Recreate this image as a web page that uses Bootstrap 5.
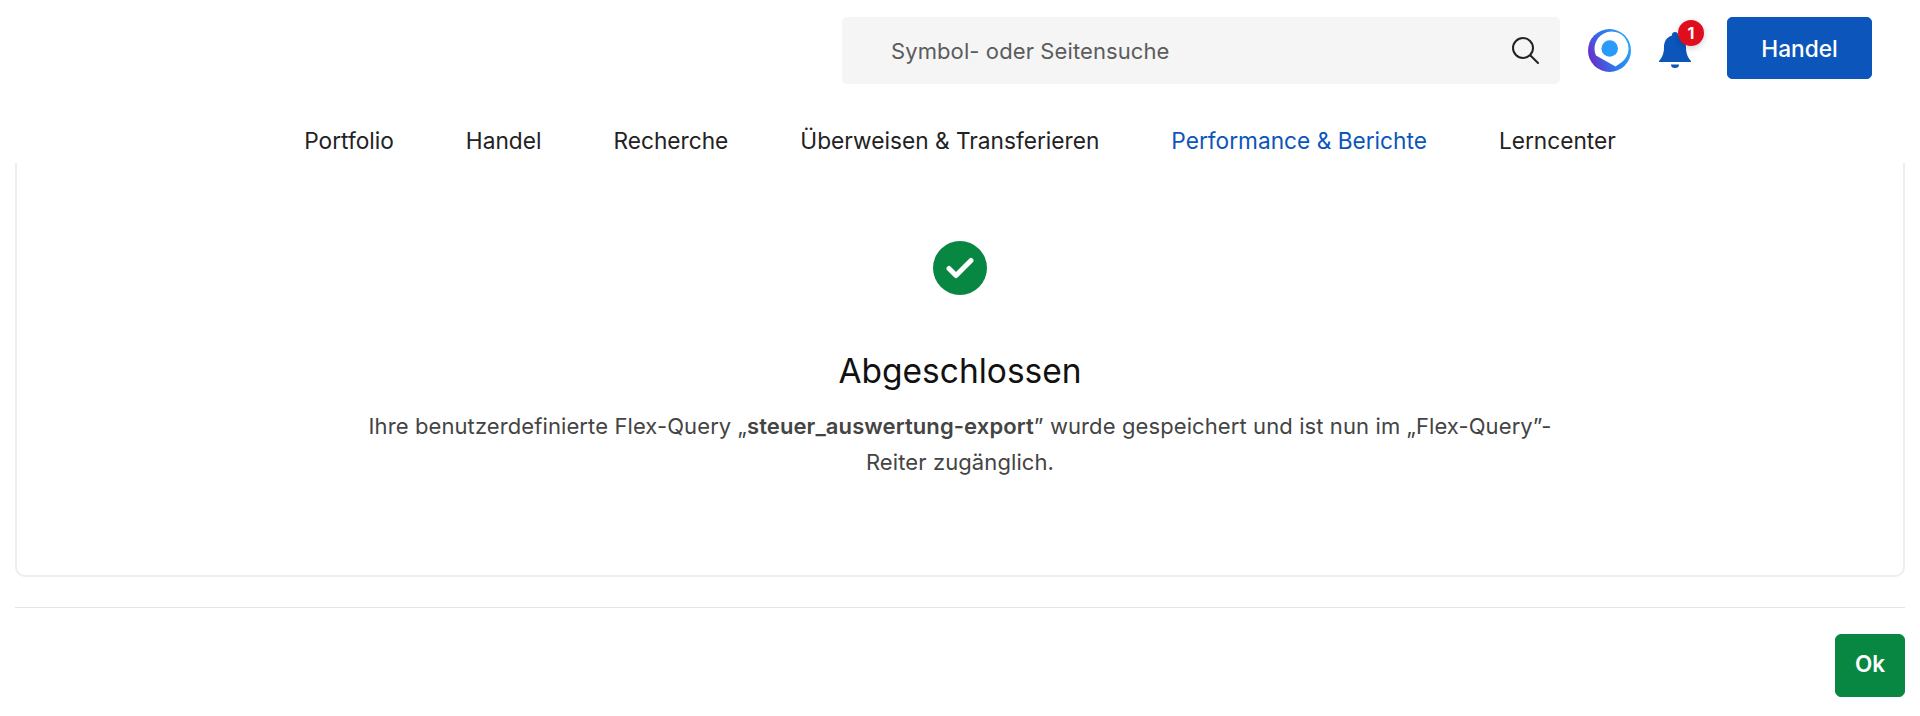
<!DOCTYPE html>
<html lang="de">
<head>
<meta charset="utf-8">
<title>Abgeschlossen</title>
<link href="https://cdn.jsdelivr.net/npm/bootstrap@5.3.0/dist/css/bootstrap.min.css" rel="stylesheet">
<style>
html,body{height:716px;overflow:hidden;background:#fff}
body{font-family:Inter,"Liberation Sans",sans-serif;color:#222}
.top-head{height:163px;padding-top:17px}
.top-bar{height:67px;padding-right:48px}
.search-wrap{width:718px;height:67px;background:#f5f5f5;border-radius:5px;padding:2px 20px 0 49px;margin-right:28px}
.search-field{background:transparent;border:0;outline:0;flex:1;font-size:22px;letter-spacing:.1px;padding:0;color:#555}
.search-field::placeholder{color:#5c5c5c;opacity:1}
.search-glass{margin-top:-4px}
.bell-box{width:32px;height:36px;margin-left:28px;margin-right:36px;margin-top:-2px}
.bell-count{width:26px;height:26px;top:-12px;right:-13px;background:#e00d1f;color:#fff;font-size:16px;font-weight:700;box-shadow:0 2px 6px rgba(0,0,0,.2)}
.trade-btn{width:145px;height:62px;background:#0b55bb;border-color:#0b55bb;color:#fff;font-size:22.700px;font-weight:500;border-radius:5px;margin-top:-5px;padding:2px 0 0}
.main-tabs{gap:72px;margin-top:43px}
.main-tabs .nav-link{padding:0;font-size:22.700px;line-height:28px;color:#222}
.main-tabs .nav-link.active{color:#0b55bb}
.page-wrap{padding:0 15px}
.done-card{height:414px;border:2px solid #eee;border-top:0;border-radius:0 0 10px 10px;padding-top:78px}
.done-check{width:54px;height:54px;background:#078742}
.done-title{font-size:33.500px;line-height:40px;font-weight:400;color:#111;margin:56px 0 17px}
.done-text{width:1200px;font-size:22px;letter-spacing:.1px;line-height:36px;color:#444}
.done-text strong{font-weight:600}
.rule{margin:30px 0 26px;border-top:1px solid #e4e4e4;opacity:1}
.ok-btn{width:70px;height:63px;background:#078742;border-color:#078742;color:#fff;font-size:22.500px;font-weight:600;border-radius:6px;padding:0 0 3px}
</style>
</head>
<body>
<header class="top-head">
  <div class="top-bar d-flex justify-content-end align-items-center">
    <div class="search-wrap d-flex align-items-center">
      <input class="search-field" type="text" placeholder="Symbol- oder Seitensuche" aria-label="Suche">
      <svg class="search-glass" width="30" height="30" viewBox="0 0 30 30" fill="none" stroke="#222" stroke-width="2" stroke-linecap="round"><circle cx="13" cy="13" r="10"/><path d="M20.500 20.500 28 28"/></svg>
    </div>
    <svg width="43" height="43" viewBox="0 0 43 43">
      <defs>
        <linearGradient id="ringg" x1="0" y1=".7" x2="1" y2=".3">
          <stop offset="0" stop-color="#7028c8"/><stop offset=".45" stop-color="#2f74ea"/><stop offset="1" stop-color="#25a8fc"/>
        </linearGradient>
      </defs>
      <circle cx="21.500" cy="21.500" r="21.500" fill="url(#ringg)"/>
      <path d="M8 26.500A17 17 0 1 1 34 33L27.500 37.500Z" fill="#fff"/>
      <circle cx="21.700" cy="19.500" r="8.300" fill="#2a9bf8"/>
    </svg>
    <div class="bell-box position-relative">
      <svg width="32" height="36" viewBox="0 0 32 36" fill="#0b55bb"><path d="M16 0a3 3 0 0 1 3 3v.6C24.500 5 27 10 27 15c0 6 1.500 10 5 14v1H0v-1c3.500-4 5-8 5-14 0-5 2.500-10 8-11.400V3a3 3 0 0 1 3-3Z"/><path d="M12 32.500h8a4 3.500 0 0 1-8 0Z"/></svg>
      <span class="bell-count position-absolute rounded-circle d-flex align-items-center justify-content-center">1</span>
    </div>
    <button type="button" class="btn trade-btn">Handel</button>
  </div>
  <ul class="nav main-tabs justify-content-center">
    <li class="nav-item"><a class="nav-link" href="#">Portfolio</a></li>
    <li class="nav-item"><a class="nav-link" href="#">Handel</a></li>
    <li class="nav-item"><a class="nav-link" href="#">Recherche</a></li>
    <li class="nav-item"><a class="nav-link" href="#">Überweisen &amp; Transferieren</a></li>
    <li class="nav-item"><a class="nav-link active" href="#">Performance &amp; Berichte</a></li>
    <li class="nav-item"><a class="nav-link" href="#">Lerncenter</a></li>
  </ul>
</header>
<main class="page-wrap">
  <div class="card done-card align-items-center text-center">
    <div class="done-check rounded-circle d-flex align-items-center justify-content-center">
      <svg width="28" height="22" viewBox="0 0 28 22" fill="none" stroke="#fff" stroke-width="5" stroke-linecap="round" stroke-linejoin="round"><path d="M3 11.500 10 18.500 25 3.500"/></svg>
    </div>
    <h1 class="done-title">Abgeschlossen</h1>
    <p class="done-text mb-0">Ihre benutzerdefinierte Flex-Query „<strong>steuer_auswertung-export</strong>” wurde gespeichert und ist nun im „Flex-Query”-Reiter zugänglich.</p>
  </div>
  <hr class="rule">
  <div class="d-flex justify-content-end">
    <button type="button" class="btn ok-btn">Ok</button>
  </div>
</main>
</body>
</html>
